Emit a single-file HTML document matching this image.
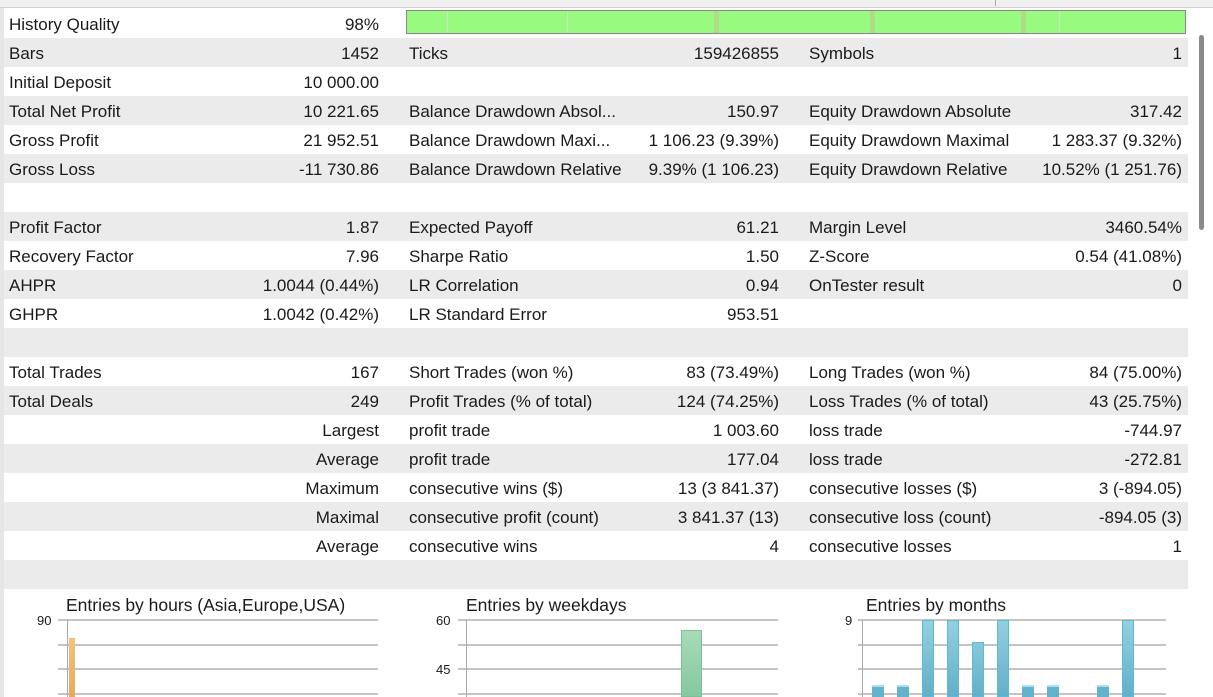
<!DOCTYPE html>
<html><head><meta charset="utf-8"><style>
*{margin:0;padding:0;box-sizing:border-box}
body{width:1213px;height:697px;overflow:hidden;background:#fff;font-family:"Liberation Sans",sans-serif;font-size:17px;color:#1a1a1a;position:relative}
.top{position:absolute;left:0;top:0;width:1213px;height:8px;background:#f0f0f0;border-bottom:1px solid #d0d0d0}
.row{position:absolute;left:4px;width:1184px;height:29px}
.g{background:#ebebeb}
.row span{position:absolute;top:6px;white-space:nowrap}
.l1{left:5px}.v1{right:809px}.l2{left:405px}.v2{right:409px}.l3{left:805px}.v3{right:6px}
.sb{position:absolute;left:1188px;top:8px;width:25px;height:689px;background:#fff}
.thumb{position:absolute;left:1199px;top:35px;width:5px;height:195px;background:#8a8a8a;border-radius:3px}
.ct{position:absolute;font-size:17.5px;top:595px}
.ax{position:absolute;font-size:13px}
.gl{position:absolute;height:2px;background:#c4c4c4}
.va{position:absolute;width:1px;background:#aaa;top:620px;height:77px}
</style></head><body>
<div class="top"></div>
<div class="row" style="top:9px"><span class="l1">History Quality</span><span class="v1">98%</span></div>
<div style="position:absolute;left:406px;top:10px;width:780px;height:24px;background:#98fb80;border:1px solid #888">
<div style="position:absolute;left:40px;top:0;width:1px;height:22px;background:#c8e8c0"></div>
<div style="position:absolute;left:160px;top:0;width:1px;height:22px;background:#c8e8c0"></div>
<div style="position:absolute;left:307px;top:0;width:5px;height:22px;background:#b0dc88"></div>
<div style="position:absolute;left:463px;top:0;width:5px;height:22px;background:#b0dc88"></div>
<div style="position:absolute;left:614px;top:0;width:5px;height:22px;background:#b0dc88"></div>
<div style="position:absolute;left:652px;top:0;width:1px;height:22px;background:#c8e8c0"></div>
</div>
<div class="row g" style="top:38px"><span class="l1">Bars</span><span class="v1">1452</span><span class="l2">Ticks</span><span class="v2">159426855</span><span class="l3">Symbols</span><span class="v3">1</span></div>
<div class="row" style="top:67px"><span class="l1">Initial Deposit</span><span class="v1">10 000.00</span></div>
<div class="row g" style="top:96px"><span class="l1">Total Net Profit</span><span class="v1">10 221.65</span><span class="l2">Balance Drawdown Absol...</span><span class="v2">150.97</span><span class="l3">Equity Drawdown Absolute</span><span class="v3">317.42</span></div>
<div class="row" style="top:125px"><span class="l1">Gross Profit</span><span class="v1">21 952.51</span><span class="l2">Balance Drawdown Maxi...</span><span class="v2">1 106.23 (9.39%)</span><span class="l3">Equity Drawdown Maximal</span><span class="v3">1 283.37 (9.32%)</span></div>
<div class="row g" style="top:154px"><span class="l1">Gross Loss</span><span class="v1">-11 730.86</span><span class="l2">Balance Drawdown Relative</span><span class="v2">9.39% (1 106.23)</span><span class="l3">Equity Drawdown Relative</span><span class="v3">10.52% (1 251.76)</span></div>
<div class="row g" style="top:212px"><span class="l1">Profit Factor</span><span class="v1">1.87</span><span class="l2">Expected Payoff</span><span class="v2">61.21</span><span class="l3">Margin Level</span><span class="v3">3460.54%</span></div>
<div class="row" style="top:241px"><span class="l1">Recovery Factor</span><span class="v1">7.96</span><span class="l2">Sharpe Ratio</span><span class="v2">1.50</span><span class="l3">Z-Score</span><span class="v3">0.54 (41.08%)</span></div>
<div class="row g" style="top:270px"><span class="l1">AHPR</span><span class="v1">1.0044 (0.44%)</span><span class="l2">LR Correlation</span><span class="v2">0.94</span><span class="l3">OnTester result</span><span class="v3">0</span></div>
<div class="row" style="top:299px"><span class="l1">GHPR</span><span class="v1">1.0042 (0.42%)</span><span class="l2">LR Standard Error</span><span class="v2">953.51</span></div>
<div class="row g" style="top:328px"></div>
<div class="row" style="top:357px"><span class="l1">Total Trades</span><span class="v1">167</span><span class="l2">Short Trades (won %)</span><span class="v2">83 (73.49%)</span><span class="l3">Long Trades (won %)</span><span class="v3">84 (75.00%)</span></div>
<div class="row g" style="top:386px"><span class="l1">Total Deals</span><span class="v1">249</span><span class="l2">Profit Trades (% of total)</span><span class="v2">124 (74.25%)</span><span class="l3">Loss Trades (% of total)</span><span class="v3">43 (25.75%)</span></div>
<div class="row" style="top:415px"><span class="v1">Largest</span><span class="l2">profit trade</span><span class="v2">1 003.60</span><span class="l3">loss trade</span><span class="v3">-744.97</span></div>
<div class="row g" style="top:444px"><span class="v1">Average</span><span class="l2">profit trade</span><span class="v2">177.04</span><span class="l3">loss trade</span><span class="v3">-272.81</span></div>
<div class="row" style="top:473px"><span class="v1">Maximum</span><span class="l2">consecutive wins ($)</span><span class="v2">13 (3 841.37)</span><span class="l3">consecutive losses ($)</span><span class="v3">3 (-894.05)</span></div>
<div class="row g" style="top:502px"><span class="v1">Maximal</span><span class="l2">consecutive profit (count)</span><span class="v2">3 841.37 (13)</span><span class="l3">consecutive loss (count)</span><span class="v3">-894.05 (3)</span></div>
<div class="row" style="top:531px"><span class="v1">Average</span><span class="l2">consecutive wins</span><span class="v2">4</span><span class="l3">consecutive losses</span><span class="v3">1</span></div>
<div class="row g" style="top:560px"></div>
<div style="position:absolute;left:0;top:8px;width:4px;height:689px;background:#e6e6e6"></div>

<div class="ct" style="left:66px">Entries by hours (Asia,Europe,USA)</div>
<div class="ct" style="left:466px">Entries by weekdays</div>
<div class="ct" style="left:866px">Entries by months</div>
<div class="ax" style="left:37px;top:613px">90</div>
<div class="ax" style="left:436px;top:613px">60</div>
<div class="ax" style="left:436px;top:662px">45</div>
<div class="ax" style="left:845px;top:613px">9</div>
<div class="gl" style="left:58px;width:320px;top:619px"></div><div class="gl" style="left:58px;width:320px;top:644px"></div><div class="gl" style="left:58px;width:320px;top:668px"></div><div class="gl" style="left:58px;width:320px;top:693px"></div>
<div class="gl" style="left:458px;width:320px;top:619px"></div><div class="gl" style="left:458px;width:320px;top:644px"></div><div class="gl" style="left:458px;width:320px;top:668px"></div><div class="gl" style="left:458px;width:320px;top:693px"></div>
<div class="gl" style="left:858px;width:308px;top:619px"></div><div class="gl" style="left:858px;width:308px;top:644px"></div><div class="gl" style="left:858px;width:308px;top:668px"></div><div class="gl" style="left:858px;width:308px;top:693px"></div>
<div class="va" style="left:67px"></div><div class="va" style="left:466px"></div><div class="va" style="left:862px"></div>
<div style="position:absolute;left:69px;top:638px;width:6px;height:59px;background:linear-gradient(#f3c27e,#e8a95a)"></div>
<div style="position:absolute;left:681px;top:630px;width:21px;height:67px;background:linear-gradient(#a6dcb8,#86c8a0);border:1px solid #7cc096"></div>
<div style="position:absolute;left:872px;top:685px;width:12px;height:12px;background:#63b3cc;border-top:2px solid #a8e0ef"></div>
<div style="position:absolute;left:897px;top:685px;width:12px;height:12px;background:#63b3cc;border-top:2px solid #a8e0ef"></div>
<div style="position:absolute;left:922px;top:620px;width:12px;height:77px;background:linear-gradient(#93d0e0,#62b0c9);border:1px solid #5cbad6"></div>
<div style="position:absolute;left:947px;top:620px;width:12px;height:77px;background:linear-gradient(#93d0e0,#62b0c9);border:1px solid #5cbad6"></div>
<div style="position:absolute;left:972px;top:642px;width:12px;height:55px;background:linear-gradient(#88c8dc,#62b0c9);border:1px solid #5cbad6"></div>
<div style="position:absolute;left:997px;top:620px;width:12px;height:77px;background:linear-gradient(#93d0e0,#62b0c9);border:1px solid #5cbad6"></div>
<div style="position:absolute;left:1022px;top:685px;width:12px;height:12px;background:#63b3cc;border-top:2px solid #a8e0ef"></div>
<div style="position:absolute;left:1047px;top:685px;width:12px;height:12px;background:#63b3cc;border-top:2px solid #a8e0ef"></div>
<div style="position:absolute;left:1097px;top:685px;width:12px;height:12px;background:#63b3cc;border-top:2px solid #a8e0ef"></div>
<div style="position:absolute;left:1122px;top:620px;width:12px;height:77px;background:linear-gradient(#93d0e0,#62b0c9);border:1px solid #5cbad6"></div>
<div class="sb"></div><div class="thumb"></div>
<div style="position:absolute;left:995px;top:0;width:1px;height:6px;background:#aaa"></div>
</body></html>
